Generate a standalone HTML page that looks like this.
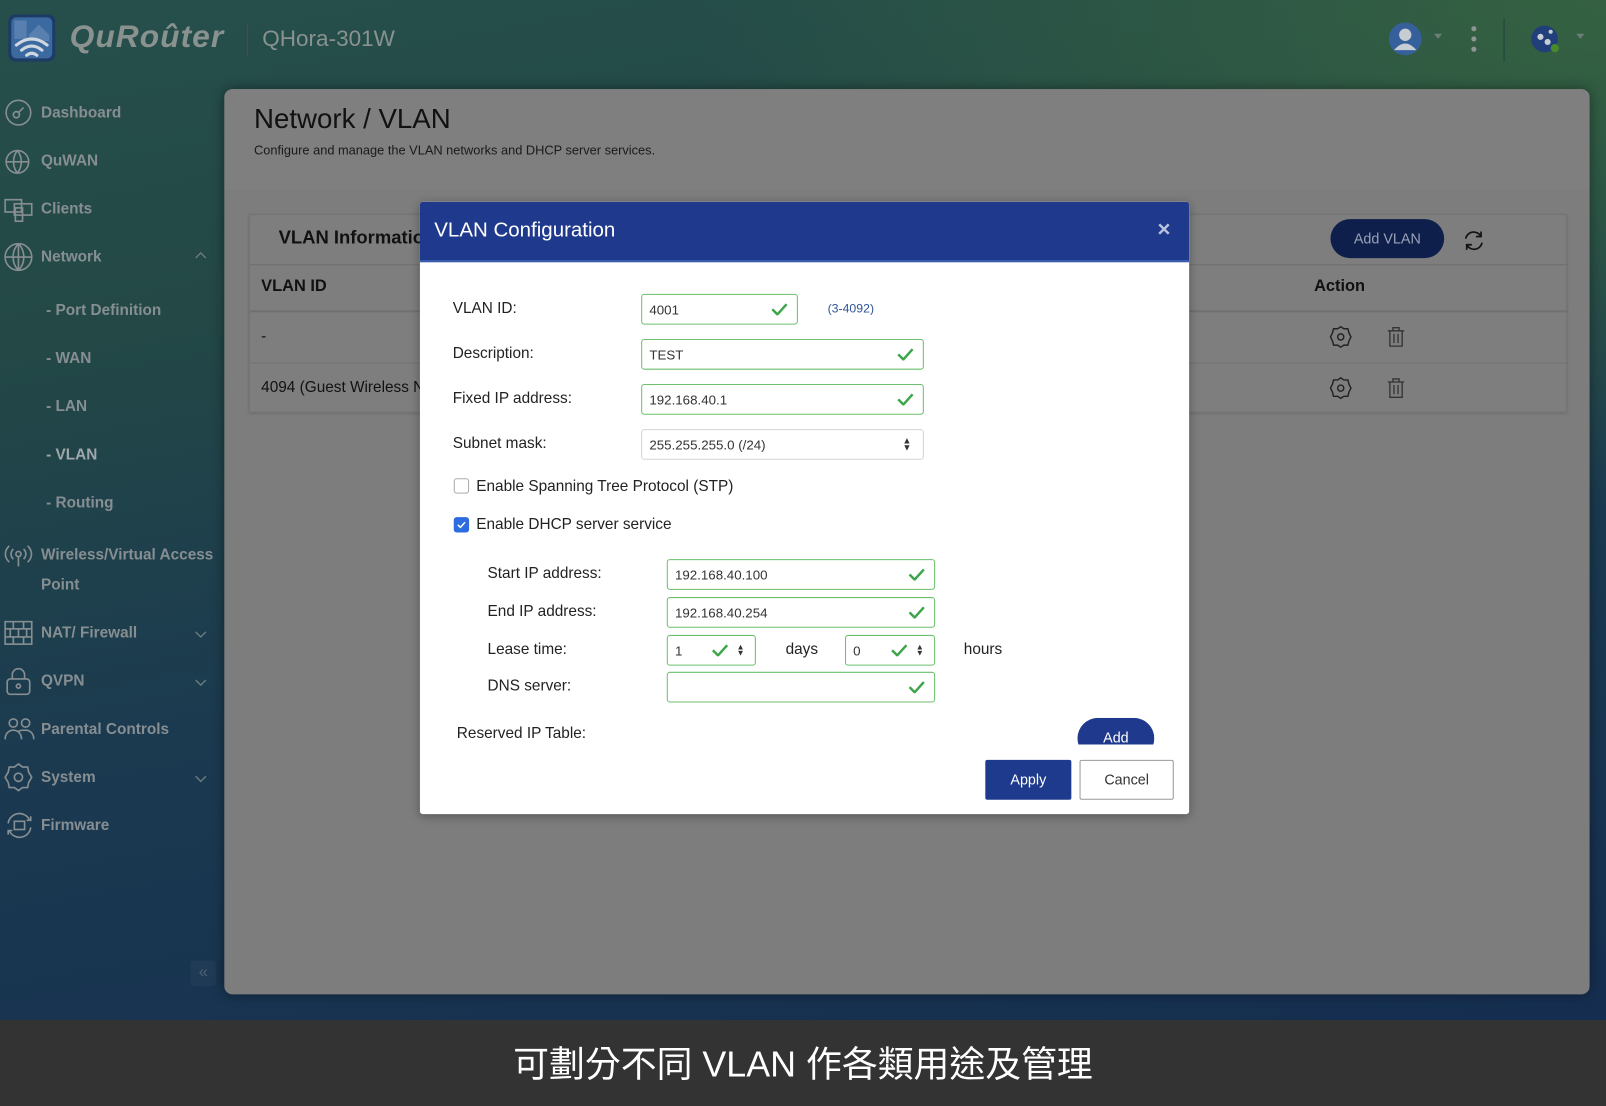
<!DOCTYPE html>
<html><head><meta charset="utf-8"><style>
*{margin:0;padding:0;box-sizing:border-box}
html,body{width:1606px;height:1106px;overflow:hidden;background:#333}
#w{position:absolute;left:0;top:0;width:1568px;height:1080px;transform:scale(1.02423,1.02408);transform-origin:0 0;font-family:"Liberation Sans",sans-serif;
background:linear-gradient(170deg,#264f4b 0%,#234846 25%,#1b3a50 55%,#142c50 100%);overflow:hidden}
#w:before{content:"";position:absolute;right:0;top:0;width:900px;height:500px;background:radial-gradient(ellipse at 100% 0%,rgba(55,100,65,.9),rgba(55,100,65,0) 70%)}
.a{position:absolute;white-space:nowrap}
.nav{position:absolute;left:40px;font-size:15px;font-weight:bold;color:#868e92;transform:translateY(-50%)}
.sub{left:45px}
.ic{position:absolute;left:4px;transform:translateY(-50%)}
.chev{position:absolute;left:190px;transform:translateY(-50%)}
.lbl{position:absolute;font-size:15px;color:#222;transform:translateY(-50%)}
.in{position:absolute;border:1.5px solid #6cbf6c;border-radius:3px;background:#fff;font-size:13px;color:#333;padding-left:7px;display:flex;align-items:center}
.ck{position:absolute;top:50%;transform:translateY(-50%)}
</style></head><body><div id="w">
<svg class="a" style="left:8px;top:14px" width="46" height="46" viewBox="0 0 46 46"><rect width="46" height="46" rx="7" fill="#1e3b66"/><rect x="3" y="3" width="40" height="40" rx="5" fill="#3b6aa0"/><rect x="6" y="6" width="12" height="18" fill="#5780b0"/><path d="M20 20 L30 10 L40 20 V26 H20Z" fill="#5780b0"/><g fill="none" stroke="#cfd8e0" stroke-width="3" stroke-linecap="round"><path d="M8 30 Q23 18 38 30"/><path d="M13 35 Q23 27 33 35"/><path d="M18 40 Q23 36 28 40"/></g></svg>
<div class="a" style="left:68px;top:18px;font-size:31px;font-style:italic;font-weight:bold;color:#8a9290;letter-spacing:1px">QuRoûter</div>
<div class="a" style="left:241px;top:24px;width:1px;height:30px;background:#5a4a45"></div>
<div class="a" style="left:256px;top:25px;font-size:22px;color:#8a9290">QHora-301W</div>
<svg class="a" style="left:1356px;top:22px" width="32" height="32"><circle cx="16" cy="16" r="16" fill="#36609c"/><circle cx="16" cy="12" r="6" fill="#c8cdd4"/><path d="M5 27 Q16 14 27 27 Z" fill="#c8cdd4"/></svg>
<div class="a" style="left:1400px;top:33px;border:4px solid transparent;border-top:5px solid #6c7e78"></div>
<svg class="a" style="left:1434px;top:24px" width="10" height="28"><circle cx="5" cy="4" r="2.5" fill="#8e9694"/><circle cx="5" cy="14" r="2.5" fill="#8e9694"/><circle cx="5" cy="24" r="2.5" fill="#8e9694"/></svg>
<div class="a" style="left:1468px;top:18px;width:1px;height:42px;background:#23433a"></div>
<svg class="a" style="left:1494px;top:24px" width="30" height="30"><circle cx="14" cy="14" r="13" fill="#213f7a"/><circle cx="10" cy="12" r="3" fill="#c8cdd4"/><circle cx="17" cy="17" r="3" fill="#c8cdd4"/><circle cx="20" cy="7" r="2" fill="#c8cdd4"/><circle cx="24" cy="23" r="4" fill="#4a8a2a"/></svg>
<div class="a" style="left:1539px;top:33px;border:4px solid transparent;border-top:5px solid #6c7e78"></div>
<svg class="ic" style="top:110px" width="28" height="28" viewBox="0 0 28 28" fill="none" stroke="#868e92" stroke-width="1.6"><circle cx="14" cy="14" r="12"/><circle cx="12" cy="16" r="3"/><path d="M14 14 L19 9"/></svg>
<div class="nav" style="top:110px">Dashboard</div>
<svg class="ic" style="top:157px" width="28" height="28" viewBox="0 0 28 28" fill="none" stroke="#868e92" stroke-width="1.6"><circle cx="13" cy="15" r="11"/><path d="M2 15h22M13 4c-5 6-5 16 0 22M13 4c5 6 5 16 0 22"/></svg>
<div class="nav" style="top:157px">QuWAN</div>
<svg class="ic" style="top:204px" width="28" height="28" viewBox="0 0 28 28" fill="none" stroke="#868e92" stroke-width="1.6"><rect x="1" y="5" width="16" height="12"/><rect x="10" y="9" width="17" height="11"/><rect x="11" y="13" width="7" height="13"/></svg>
<div class="nav" style="top:204px">Clients</div>
<svg class="ic" style="top:251px" width="28" height="28" viewBox="0 0 28 28" fill="none" stroke="#868e92" stroke-width="1.6"><circle cx="14" cy="14" r="13"/><path d="M1 14h26M14 1v26M14 1c-7 7-7 19 0 26M14 1c7 7 7 19 0 26"/></svg>
<div class="nav" style="top:251px">Network</div>
<svg class="chev" style="top:249px" width="12" height="8"><path d="M1 7 L6 2 L11 7" fill="none" stroke="#6c7e80" stroke-width="1.3"/></svg>
<div class="nav sub" style="top:303px">- Port Definition</div>
<div class="nav sub" style="top:350px">- WAN</div>
<div class="nav sub" style="top:397px">- LAN</div>
<div class="nav sub" style="top:444px;color:#a0a7aa">- VLAN</div>
<div class="nav sub" style="top:491px">- Routing</div>
<svg class="ic" style="top:543px" width="28" height="24" viewBox="0 0 28 24" fill="none" stroke="#868e92" stroke-width="1.6"><circle cx="14" cy="10" r="2.5"/><path d="M14 12v10M9 5c-3 3-3 7 0 10M19 5c3 3 3 7 0 10M5 2c-5 5-5 11 0 16M23 2c5 5 5 11 0 16"/></svg>
<div class="nav" style="top:542px">Wireless/Virtual Access</div>
<div class="nav" style="top:571px">Point</div>
<svg class="ic" style="top:618px" width="28" height="24" viewBox="0 0 28 24" fill="none" stroke="#868e92" stroke-width="1.6"><rect x="1" y="1" width="26" height="22"/><path d="M1 8h26M1 16h26M9 1v7M19 1v7M14 8v8M6 8v8M22 8v8M9 16v7M19 16v7"/></svg>
<div class="nav" style="top:618px">NAT/ Firewall</div>
<svg class="chev" style="top:620px" width="12" height="8"><path d="M1 1 L6 6 L11 1" fill="none" stroke="#6c7e80" stroke-width="1.3"/></svg>
<svg class="ic" style="top:665px" width="28" height="28" viewBox="0 0 28 28" fill="none" stroke="#868e92" stroke-width="1.6"><rect x="3" y="12" width="22" height="15" rx="3"/><path d="M8 12V8a6 6 0 0 1 12 0v4"/><circle cx="14" cy="19" r="2"/></svg>
<div class="nav" style="top:665px">QVPN</div>
<svg class="chev" style="top:667px" width="12" height="8"><path d="M1 1 L6 6 L11 1" fill="none" stroke="#6c7e80" stroke-width="1.3"/></svg>
<svg class="ic" style="top:712px" width="30" height="24" viewBox="0 0 30 24" fill="none" stroke="#868e92" stroke-width="1.6"><circle cx="9" cy="6" r="4"/><circle cx="21" cy="6" r="4"/><path d="M1 22c0-6 4-9 8-9s8 3 8 9M13 15c2-2 4-2 8-2 4 0 8 3 8 9"/></svg>
<div class="nav" style="top:712px">Parental Controls</div>
<svg class="ic" style="top:759px" width="28" height="28" viewBox="0 0 28 28" fill="none" stroke="#868e92" stroke-width="1.6"><path d="M14 1l4 3 5 0 1 5 3 5-3 5-1 5-5 0-4 3-4-3-5 0-1-5-3-5 3-5 1-5 5 0z"/><circle cx="14" cy="14" r="4"/></svg>
<div class="nav" style="top:759px">System</div>
<svg class="chev" style="top:761px" width="12" height="8"><path d="M1 1 L6 6 L11 1" fill="none" stroke="#6c7e80" stroke-width="1.3"/></svg>
<svg class="ic" style="top:806px" width="30" height="26" viewBox="0 0 30 26" fill="none" stroke="#868e92" stroke-width="1.6"><path d="M4 11a11 11 0 0 1 21-3M26 15a11 11 0 0 1-21 3"/><path d="M22 8h4V4M8 18H4v4"/><rect x="10" y="9" width="10" height="8"/></svg>
<div class="nav" style="top:806px">Firmware</div>
<div class="a" style="left:186px;top:938px;width:25px;height:25px;background:rgba(255,255,255,.03);border-radius:3px;color:#4d6275;font-size:16px;text-align:center;line-height:24px">«</div>
<div class="a" style="left:219px;top:87px;width:1333px;height:884px;background:#7d7d7d;border-radius:8px;box-shadow:0 0 12px rgba(0,0,0,.4);overflow:hidden">
 <div class="a" style="left:0;top:0;width:1333px;height:98px;background:#7f7f7f"></div>
 <div class="a" style="left:29px;top:14px;font-size:27px;color:#111">Network / VLAN</div>
 <div class="a" style="left:29px;top:53px;font-size:12.5px;color:#1a1a1a">Configure and manage the VLAN networks and DHCP server services.</div>
 <div class="a" style="left:24px;top:122px;width:1287px;height:194px;background:#7e7e7e;border:1px solid #747474;box-shadow:0 1px 3px rgba(0,0,0,.2)">
  <div class="a" style="left:28px;top:12px;font-size:18px;font-weight:bold;color:#111">VLAN Informatio</div>
  <div class="a" style="left:1055px;top:4px;width:111px;height:38px;border-radius:19px;background:#0e1f4c;color:#9aa2b5;font-size:14px;text-align:center;line-height:38px">Add VLAN</div>
  <svg class="a" style="left:1183px;top:13px" width="24" height="24" viewBox="0 0 24 24" fill="none" stroke="#111" stroke-width="1.6"><path d="M4 10a8 8 0 0 1 15-2M20 14a8 8 0 0 1-15 2"/><path d="M19 3v5h-5M5 21v-5h5"/></svg>
  <div class="a" style="left:0;top:48px;width:1287px;height:1px;background:#707070"></div>
  <div class="a" style="left:11px;top:61px;font-size:16px;font-weight:bold;color:#111">VLAN ID</div>
  <div class="a" style="left:1039px;top:61px;font-size:16px;font-weight:bold;color:#111">Action</div>
  <div class="a" style="left:0;top:93px;width:1287px;height:2px;background:#707070"></div>
  <div class="a" style="left:11px;top:110px;font-size:15px;color:#111">-</div>
  <div class="a" style="left:0;top:144px;width:1287px;height:1px;background:#737373"></div>
  <div class="a" style="left:11px;top:160px;font-size:15px;color:#111">4094 (Guest Wireless N</div>
  <svg class="a" style="left:1054px;top:108px" width="22" height="22" viewBox="0 0 22 22" fill="none" stroke="#222" stroke-width="1.4"><path d="M11 1l3 2 4 0 1 4 2 4-2 4-1 4-4 0-3 2-3-2-4 0-1-4-2-4 2-4 1-4 4 0z"/><circle cx="11" cy="11" r="3"/></svg>
  <svg class="a" style="left:1110px;top:109px" width="18" height="20" viewBox="0 0 18 20" fill="none" stroke="#333" stroke-width="1.3"><path d="M1 4h16M6 4V1h6v3M3 4v15h12V4M7 7v9M11 7v9"/></svg>
  <svg class="a" style="left:1054px;top:158px" width="22" height="22" viewBox="0 0 22 22" fill="none" stroke="#222" stroke-width="1.4"><path d="M11 1l3 2 4 0 1 4 2 4-2 4-1 4-4 0-3 2-3-2-4 0-1-4-2-4 2-4 1-4 4 0z"/><circle cx="11" cy="11" r="3"/></svg>
  <svg class="a" style="left:1110px;top:159px" width="18" height="20" viewBox="0 0 18 20" fill="none" stroke="#333" stroke-width="1.3"><path d="M1 4h16M6 4V1h6v3M3 4v15h12V4M7 7v9M11 7v9"/></svg>
 </div>
</div>
<div class="a" style="left:410px;top:197px;width:751px;height:598px;background:#fff;border-radius:3px;overflow:hidden;box-shadow:0 2px 10px rgba(0,0,0,.3)">
 <div class="a" style="left:0;top:0;width:751px;height:59px;background:#1f3a8d;border-bottom:2px solid #3a5fb0"></div>
 <div class="a" style="left:14px;top:17px;font-size:20px;color:#fff">VLAN Configuration</div>
 <div class="a" style="left:720px;top:14px;font-size:22px;font-weight:bold;color:#b8c2dc">×</div>
</div>
<div class="lbl" style="left:442px;top:301px">VLAN ID:</div>
<div class="in" style="left:626px;top:287px;width:153px;height:30px">4001<svg class="ck" style="right:9px" width="16" height="12"><path d="M1 6 L6 11 L15 1" fill="none" stroke="#3da54a" stroke-width="2.4"/></svg></div>
<div class="a" style="left:808px;top:294px;font-size:12px;color:#2f5597">(3-4092)</div>
<div class="lbl" style="left:442px;top:345px">Description:</div>
<div class="in" style="left:626px;top:331px;width:276px;height:30px">TEST<svg class="ck" style="right:9px" width="16" height="12"><path d="M1 6 L6 11 L15 1" fill="none" stroke="#3da54a" stroke-width="2.4"/></svg></div>
<div class="lbl" style="left:442px;top:389px">Fixed IP address:</div>
<div class="in" style="left:626px;top:375px;width:276px;height:30px">192.168.40.1<svg class="ck" style="right:9px" width="16" height="12"><path d="M1 6 L6 11 L15 1" fill="none" stroke="#3da54a" stroke-width="2.4"/></svg></div>
<div class="lbl" style="left:442px;top:433px">Subnet mask:</div>
<div class="in" style="left:626px;top:419px;width:276px;height:30px;border:1px solid #d4d4d4">255.255.255.0 (/24)<div class="ck" style="right:11px;font-size:9px;line-height:7px;color:#333">▲<br>▼</div></div>
<div class="a" style="left:443px;top:467px;width:15px;height:15px;border:1px solid #aaa;border-radius:3px"></div>
<div class="lbl" style="left:465px;top:475px">Enable Spanning Tree Protocol (STP)</div>
<div class="a" style="left:443px;top:505px;width:15px;height:15px;background:#2d6ce0;border-radius:3px"><svg style="position:absolute;left:3px;top:4px" width="9" height="7"><path d="M1 3.5 L3.5 6 L8 1" fill="none" stroke="#fff" stroke-width="1.5"/></svg></div>
<div class="lbl" style="left:465px;top:512px">Enable DHCP server service</div>
<div class="lbl" style="left:476px;top:560px">Start IP address:</div>
<div class="in" style="left:651px;top:546px;width:262px;height:30px">192.168.40.100<svg class="ck" style="right:9px" width="16" height="12"><path d="M1 6 L6 11 L15 1" fill="none" stroke="#3da54a" stroke-width="2.4"/></svg></div>
<div class="lbl" style="left:476px;top:597px">End IP address:</div>
<div class="in" style="left:651px;top:583px;width:262px;height:30px">192.168.40.254<svg class="ck" style="right:9px" width="16" height="12"><path d="M1 6 L6 11 L15 1" fill="none" stroke="#3da54a" stroke-width="2.4"/></svg></div>
<div class="lbl" style="left:476px;top:634px">Lease time:</div>
<div class="in" style="left:651px;top:620px;width:87px;height:30px">1<svg class="ck" style="right:26px" width="16" height="12"><path d="M1 6 L6 11 L15 1" fill="none" stroke="#3da54a" stroke-width="2.4"/></svg><div class="ck" style="right:10px;font-size:8px;line-height:6px;color:#333">▲<br>▼</div></div>
<div class="lbl" style="left:767px;top:634px">days</div>
<div class="in" style="left:825px;top:620px;width:88px;height:30px">0<svg class="ck" style="right:26px" width="16" height="12"><path d="M1 6 L6 11 L15 1" fill="none" stroke="#3da54a" stroke-width="2.4"/></svg><div class="ck" style="right:10px;font-size:8px;line-height:6px;color:#333">▲<br>▼</div></div>
<div class="lbl" style="left:941px;top:634px">hours</div>
<div class="lbl" style="left:476px;top:670px">DNS server:</div>
<div class="in" style="left:651px;top:656px;width:262px;height:30px"><svg class="ck" style="right:9px" width="16" height="12"><path d="M1 6 L6 11 L15 1" fill="none" stroke="#3da54a" stroke-width="2.4"/></svg></div>
<div class="lbl" style="left:446px;top:716px">Reserved IP Table:</div>
<div class="a" style="left:1052px;top:701px;width:75px;height:26px;overflow:hidden"><div style="width:75px;height:40px;border-radius:20px;background:#1f3a8d;color:#fff;font-size:14px;text-align:center;padding-top:11px">Add</div></div>
<div class="a" style="left:962px;top:742px;width:84px;height:39px;background:#1e3a8c;border-radius:2px;color:#fff;font-size:14px;text-align:center;line-height:39px">Apply</div>
<div class="a" style="left:1054px;top:742px;width:92px;height:39px;border:1px solid #999;border-radius:2px;color:#333;font-size:14px;text-align:center;line-height:37px">Cancel</div>
<div class="a" style="left:0;top:996px;width:1568px;height:84px;background:#333"></div>
<div class="a" style="left:0;top:1011px;width:1568px;text-align:center;font-size:35px;color:#fff;font-family:'Liberation Sans','Noto Sans CJK TC',sans-serif">可劃分不同 VLAN 作各類用途及管理</div>
</div></body></html>
